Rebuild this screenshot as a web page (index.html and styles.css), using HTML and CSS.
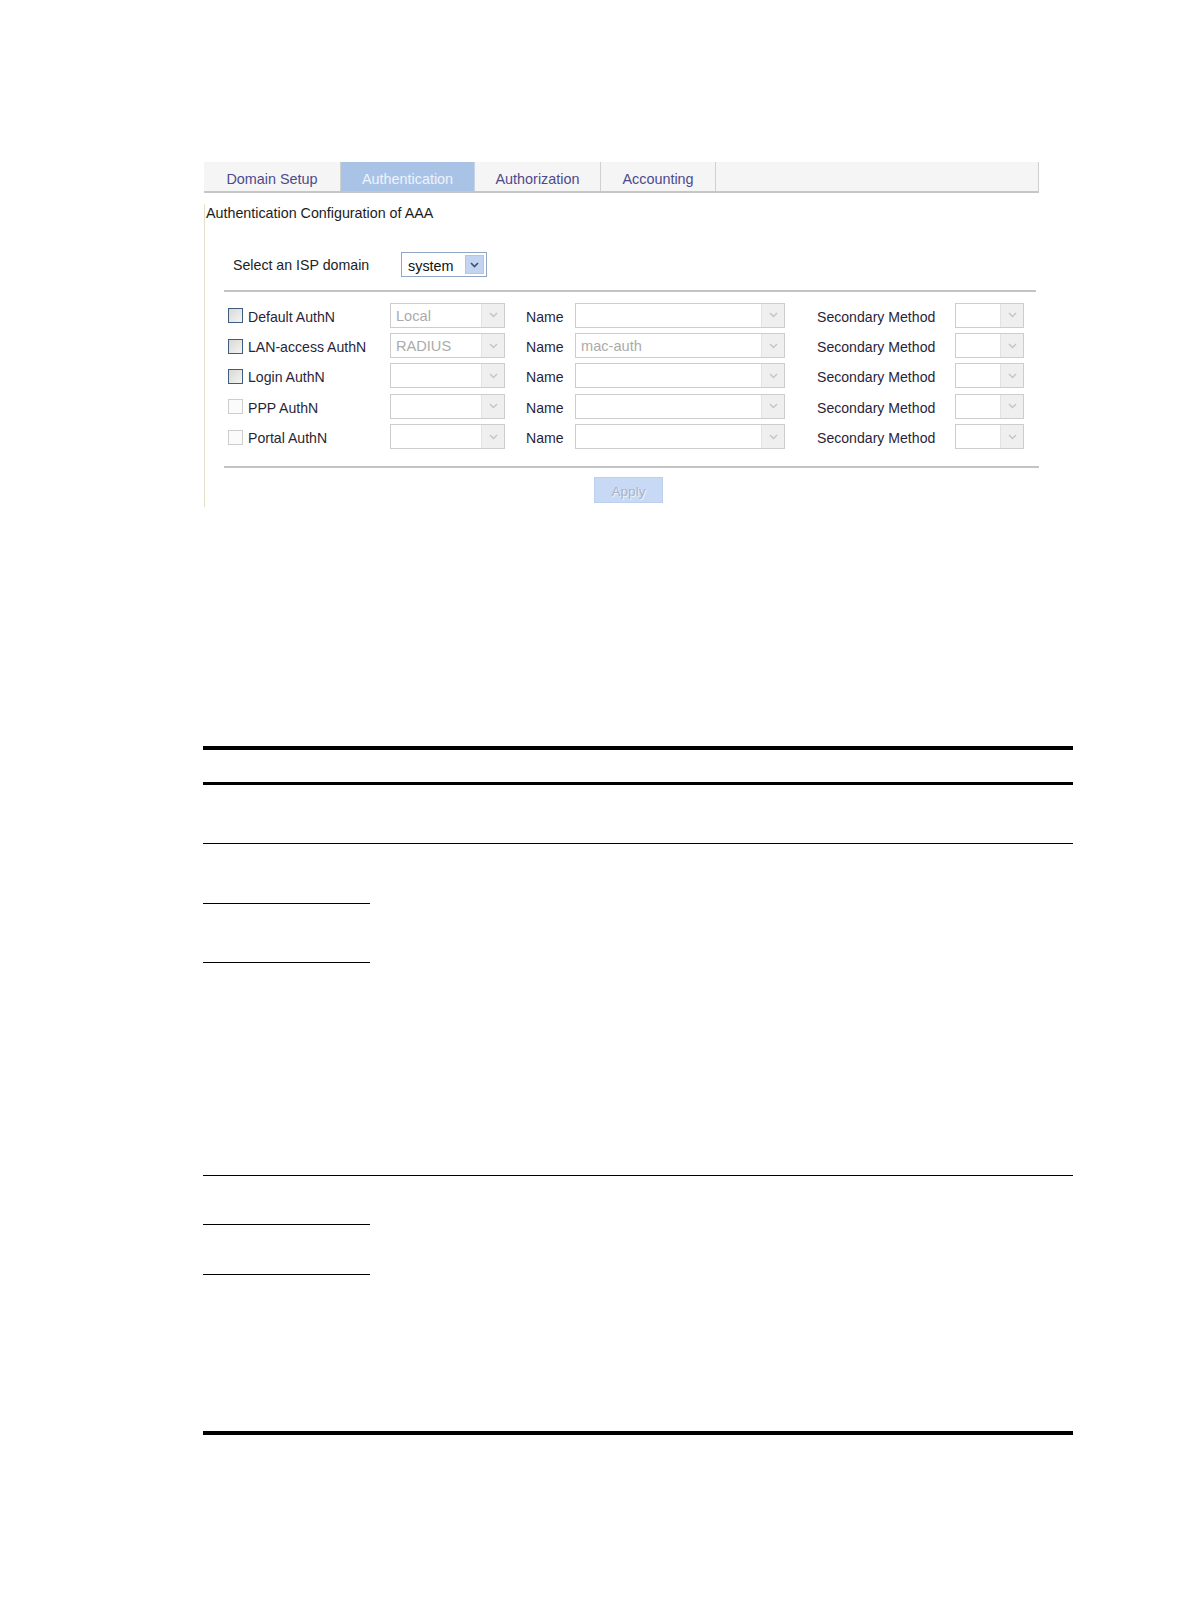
FILE: index.html
```html
<!DOCTYPE html>
<html>
<head>
<meta charset="utf-8">
<title>Authentication Configuration of AAA</title>
<link rel="stylesheet" href="styles.css">
</head>
<body>
<div class="page">
  <div class="panel">
    <div class="tabs">
      <div class="tab t1">Domain Setup</div>
      <div class="tab t2 active">Authentication</div>
      <div class="tab t3">Authorization</div>
      <div class="tab t4">Accounting</div>
    </div>
    <div class="panel-body">
      <div class="title">Authentication Configuration of AAA</div>
      <div class="isp-row">
        <span class="isp-label">Select an ISP domain</span>
        <span class="isp-select"><span class="isp-val">system</span><span class="isp-btn"><svg width="9" height="6" viewBox="0 0 9 6"><path d="M1 1 L4.5 4.5 L8 1" fill="none" stroke="#3b4f7a" stroke-width="1.6"/></svg></span></span>
      </div>
      <div class="rule"></div>
      <div class="grid">
        <div class="chk-cell"><span class="chk on"></span><span class="lbl">Default AuthN</span></div>
        <div class="cell"><span class="sel w1"><span class="val">Local</span><span class="btn"><svg width="9" height="6" viewBox="0 0 9 6"><path d="M1 1 L4.5 4.5 L8 1" fill="none" stroke="#c4c4c4" stroke-width="1.4"/></svg></span></span></div>
        <div class="cell lbl">Name</div>
        <div class="cell"><span class="sel w2"><span class="val"></span><span class="btn"><svg width="9" height="6" viewBox="0 0 9 6"><path d="M1 1 L4.5 4.5 L8 1" fill="none" stroke="#c4c4c4" stroke-width="1.4"/></svg></span></span></div>
        <div class="cell lbl">Secondary Method</div>
        <div class="cell"><span class="sel w3"><span class="val"></span><span class="btn"><svg width="9" height="6" viewBox="0 0 9 6"><path d="M1 1 L4.5 4.5 L8 1" fill="none" stroke="#c4c4c4" stroke-width="1.4"/></svg></span></span></div>

        <div class="chk-cell"><span class="chk on"></span><span class="lbl">LAN-access AuthN</span></div>
        <div class="cell"><span class="sel w1"><span class="val">RADIUS</span><span class="btn"><svg width="9" height="6" viewBox="0 0 9 6"><path d="M1 1 L4.5 4.5 L8 1" fill="none" stroke="#c4c4c4" stroke-width="1.4"/></svg></span></span></div>
        <div class="cell lbl">Name</div>
        <div class="cell"><span class="sel w2"><span class="val">mac-auth</span><span class="btn"><svg width="9" height="6" viewBox="0 0 9 6"><path d="M1 1 L4.5 4.5 L8 1" fill="none" stroke="#c4c4c4" stroke-width="1.4"/></svg></span></span></div>
        <div class="cell lbl">Secondary Method</div>
        <div class="cell"><span class="sel w3"><span class="val"></span><span class="btn"><svg width="9" height="6" viewBox="0 0 9 6"><path d="M1 1 L4.5 4.5 L8 1" fill="none" stroke="#c4c4c4" stroke-width="1.4"/></svg></span></span></div>

        <div class="chk-cell"><span class="chk on"></span><span class="lbl">Login AuthN</span></div>
        <div class="cell"><span class="sel w1"><span class="val"></span><span class="btn"><svg width="9" height="6" viewBox="0 0 9 6"><path d="M1 1 L4.5 4.5 L8 1" fill="none" stroke="#c4c4c4" stroke-width="1.4"/></svg></span></span></div>
        <div class="cell lbl">Name</div>
        <div class="cell"><span class="sel w2"><span class="val"></span><span class="btn"><svg width="9" height="6" viewBox="0 0 9 6"><path d="M1 1 L4.5 4.5 L8 1" fill="none" stroke="#c4c4c4" stroke-width="1.4"/></svg></span></span></div>
        <div class="cell lbl">Secondary Method</div>
        <div class="cell"><span class="sel w3"><span class="val"></span><span class="btn"><svg width="9" height="6" viewBox="0 0 9 6"><path d="M1 1 L4.5 4.5 L8 1" fill="none" stroke="#c4c4c4" stroke-width="1.4"/></svg></span></span></div>

        <div class="chk-cell"><span class="chk off"></span><span class="lbl">PPP AuthN</span></div>
        <div class="cell"><span class="sel w1"><span class="val"></span><span class="btn"><svg width="9" height="6" viewBox="0 0 9 6"><path d="M1 1 L4.5 4.5 L8 1" fill="none" stroke="#c4c4c4" stroke-width="1.4"/></svg></span></span></div>
        <div class="cell lbl">Name</div>
        <div class="cell"><span class="sel w2"><span class="val"></span><span class="btn"><svg width="9" height="6" viewBox="0 0 9 6"><path d="M1 1 L4.5 4.5 L8 1" fill="none" stroke="#c4c4c4" stroke-width="1.4"/></svg></span></span></div>
        <div class="cell lbl">Secondary Method</div>
        <div class="cell"><span class="sel w3"><span class="val"></span><span class="btn"><svg width="9" height="6" viewBox="0 0 9 6"><path d="M1 1 L4.5 4.5 L8 1" fill="none" stroke="#c4c4c4" stroke-width="1.4"/></svg></span></span></div>

        <div class="chk-cell"><span class="chk off"></span><span class="lbl">Portal AuthN</span></div>
        <div class="cell"><span class="sel w1"><span class="val"></span><span class="btn"><svg width="9" height="6" viewBox="0 0 9 6"><path d="M1 1 L4.5 4.5 L8 1" fill="none" stroke="#c4c4c4" stroke-width="1.4"/></svg></span></span></div>
        <div class="cell lbl">Name</div>
        <div class="cell"><span class="sel w2"><span class="val"></span><span class="btn"><svg width="9" height="6" viewBox="0 0 9 6"><path d="M1 1 L4.5 4.5 L8 1" fill="none" stroke="#c4c4c4" stroke-width="1.4"/></svg></span></span></div>
        <div class="cell lbl">Secondary Method</div>
        <div class="cell"><span class="sel w3"><span class="val"></span><span class="btn"><svg width="9" height="6" viewBox="0 0 9 6"><path d="M1 1 L4.5 4.5 L8 1" fill="none" stroke="#c4c4c4" stroke-width="1.4"/></svg></span></span></div>
      </div>
      <div class="rule rule-bottom"></div>
      <div class="apply-row"><span class="apply">Apply</span></div>
    </div>
  </div>

  <div class="doc">
    <div class="doc-head"></div>
    <div class="doc-row"></div>
    <div class="doc-group g1">
      <div class="col1">
        <div class="c1 h59 lined"></div>
        <div class="c1 h58 lined"></div>
        <div class="c1 grow"></div>
      </div>
      <div class="col2"></div>
    </div>
    <div class="doc-group g2">
      <div class="col1">
        <div class="c1 h48 lined"></div>
        <div class="c1 h49 lined"></div>
        <div class="c1 grow"></div>
      </div>
      <div class="col2"></div>
    </div>
  </div>
</div>
</body>
</html>
```
FILE: styles.css
```css
html, body {
  margin: 0;
  padding: 0;
  background: #ffffff;
}
body {
  font-family: "Liberation Sans", Arial, sans-serif;
  color: #2a1f3a;
}
.page {
  padding-top: 162px;
  padding-left: 203px;
}
.panel {
  width: 835px;
  margin-left: 1px;
}
.tabs {
  display: flex;
  height: 29px;
  background: #f5f5f5;
  border-bottom: 2px solid #c6c6c6;
  border-right: 1px solid #cfcfcf;
}
.tab {
  box-sizing: border-box;
  display: flex;
  align-items: center;
  justify-content: center;
  padding-top: 5px;
  font-size: 14.4px;
  color: #4c4a8c;
  border-right: 1px solid #d0d0d0;
}
.t1 { width: 137px; }
.t2 { width: 134px; }
.t3 { width: 126px; }
.t4 { width: 115px; }
.tab.active {
  background: #a9c3e7;
  color: #eef3fb;
  border-right-color: #c8d4e6;
}
.panel-body {
  border-left: 1px solid #e3e0ca;
  padding-bottom: 4px;
}
.title {
  margin-top: 11px;
  padding-left: 1px;
  font-size: 14.3px;
  line-height: 18px;
  color: #1c1c1c;
}
.isp-row {
  display: flex;
  align-items: center;
  margin-top: 30px;
  padding-left: 28px;
}
.isp-label {
  width: 168px;
  font-size: 14.2px;
  color: #222;
}
.isp-select {
  box-sizing: border-box;
  display: flex;
  align-items: center;
  width: 86px;
  height: 25px;
  border: 1px solid #8fa6c4;
  background: #fff;
  padding: 2px;
}
.isp-val {
  flex: 1;
  padding-left: 4px;
  font-size: 14.4px;
  color: #111;
  padding-top: 2px;
}
.isp-btn {
  box-sizing: border-box;
  width: 19px;
  height: 19px;
  background: #c3d4f1;
  border: 1px solid #b3c6ea;
  display: flex;
  align-items: center;
  justify-content: center;
}
.rule {
  margin-top: 13px;
  margin-left: 19px;
  width: 812px;
  height: 2px;
  background: #c4c4c4;
}
.rule-bottom {
  margin-top: 14px;
  width: 815px;
}
.grid {
  display: grid;
  grid-template-columns: 162px 136px 49px 242px 138px 69px;
  grid-auto-rows: 30.4px;
  align-items: center;
  margin-top: 8px;
  padding-left: 23px;
}
.chk-cell {
  display: flex;
  align-items: center;
  gap: 5px;
}
.chk {
  box-sizing: border-box;
  display: inline-block;
  width: 15px;
  height: 15px;
  margin-top: 1px;
}
.chk.on {
  border: 1px solid #3f5d7e;
  background: linear-gradient(135deg, #d8d8d4 0%, #f4f4f2 100%);
}
.chk.off {
  border: 1px solid #cdcdcd;
  background: #fbfbfb;
}
.lbl {
  font-size: 14.1px;
  color: #2a1f3a;
  padding-top: 3px;
}
.cell {
  display: flex;
  align-items: center;
}
.sel {
  box-sizing: border-box;
  display: flex;
  align-items: stretch;
  height: 25px;
  border: 1px solid #cdcdcd;
  background: #fff;
}
.w1 { width: 115px; }
.w2 { width: 210px; }
.w3 { width: 69px; }
.val {
  flex: 1;
  display: flex;
  align-items: center;
  padding-left: 5px;
  padding-top: 1px;
  font-size: 14.6px;
  color: #ababab;
}
.btn {
  width: 22px;
  background: #efefef;
  border-left: 1px solid #e2e2e2;
  display: flex;
  align-items: center;
  justify-content: center;
}
.apply-row {
  display: flex;
  margin-top: 9px;
  padding-left: 389px;
}
.apply {
  box-sizing: border-box;
  width: 69px;
  height: 26px;
  background: #c7d9f4;
  border: 1px solid #bccfee;
  color: #a8b4c7;
  text-shadow: 1px 1px 0 #eef3fa;
  font-size: 13.6px;
  display: flex;
  align-items: center;
  justify-content: center;
  padding-top: 3px;
}
.doc {
  width: 870px;
  margin-top: 239px;
  border-top: 4px solid #000;
  border-bottom: 4px solid #000;
}
.doc-head {
  height: 32px;
  border-bottom: 3px solid #000;
}
.doc-row {
  height: 58px;
  border-bottom: 1px solid #000;
}
.doc-group {
  display: flex;
}
.g1 {
  height: 331px;
  border-bottom: 1px solid #000;
}
.g2 {
  height: 255px;
}
.col1 {
  width: 167px;
  display: flex;
  flex-direction: column;
}
.col2 {
  flex: 1;
}
.c1.lined {
  border-bottom: 1px solid #000;
}
.h59 { height: 59px; }
.h58 { height: 58px; }
.h48 { height: 48px; }
.h49 { height: 49px; }
.grow { flex: 1; }
```
